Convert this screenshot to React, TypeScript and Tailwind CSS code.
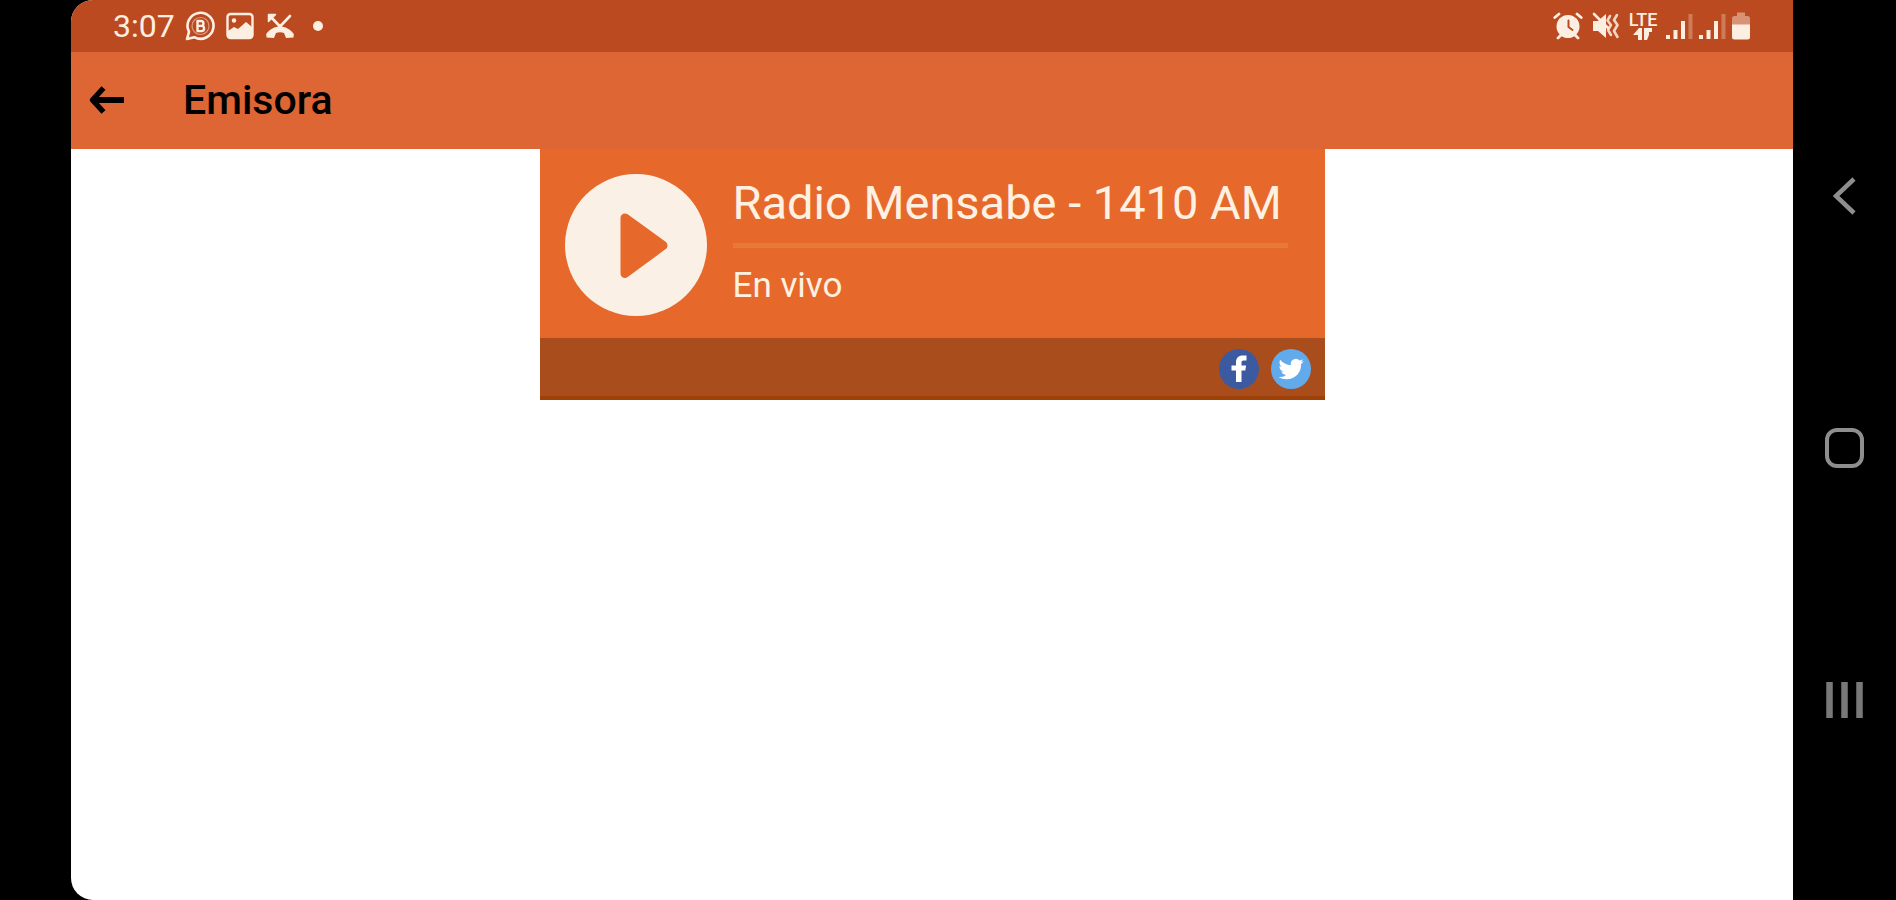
import type { ReactNode } from "react";

const ICON_COLOR = "#fdeee2";

function IconBase({ children, className }: { children: ReactNode; className: string }) {
  return (
    <svg
      viewBox="0 0 30 30"
      className={className}
      fill="none"
      stroke={ICON_COLOR}
      strokeLinecap="round"
      strokeLinejoin="round"
      aria-hidden="true"
    >
      {children}
    </svg>
  );
}

function BusinessChatIcon() {
  return (
    <IconBase className="size-[30px]">
      <path d="M2 28l2-7.200A13 13 0 1 1 9.300 26.200z" strokeWidth="2.600" />
      <circle cx="15.500" cy="15" r="8.500" strokeWidth="1.200" opacity="0.5" />
      <path
        d="M12.500 10h3.500a2.400 2.400 0 0 1 0 4.900h-3.500zM12.500 14.900h4a2.600 2.600 0 0 1 0 5.200h-4z"
        strokeWidth="2.400"
      />
    </IconBase>
  );
}

function ImageIcon() {
  return (
    <IconBase className="size-[30px]">
      <rect x="2.500" y="3" width="25" height="24" rx="3" strokeWidth="2.400" />
      <circle cx="9" cy="9.500" r="2.200" fill={ICON_COLOR} stroke="none" />
      <path d="M3 20l6-4 4 2 8-7 6 5v10H3z" fill={ICON_COLOR} stroke="none" />
    </IconBase>
  );
}

function MissedCallIcon() {
  return (
    <IconBase className="size-[30px]">
      <path d="M6 6l9 9.500L25 5" strokeWidth="2.600" />
      <path d="M3.500 10.500V3.500h7z" fill={ICON_COLOR} strokeWidth="1.500" />
      <path
        d="M1.200 23c7-10 20.600-10 27.600 0l-.3 3.500-7.500.5-2-5c-2.600-.9-5.400-.9-8 0l-2 5-7.500-.5z"
        fill={ICON_COLOR}
        stroke="none"
      />
    </IconBase>
  );
}

function AlarmIcon() {
  return (
    <IconBase className="size-[30px]">
      <circle cx="15" cy="15.500" r="11.500" fill={ICON_COLOR} stroke="none" />
      <path d="M1.800 6.500L6 3M28.200 6.500L24 3M5 27l3-3M25 27l-3-3" strokeWidth="2.800" />
      <path d="M15.500 9.500v6.500l4 3" stroke="#bb4a20" strokeWidth="2" />
    </IconBase>
  );
}

function MuteIcon() {
  return (
    <IconBase className="size-[30px]">
      <path d="M2 10h5l8-7v24l-8-7H2z" fill={ICON_COLOR} stroke="none" />
      <path d="M3 3l14 14" strokeWidth="2.600" />
      <path
        d="M19 5l-2.500 4.500L20 14l-3 5 3 5M26 4l-3 5 3.500 5-3.500 6 3.500 6"
        strokeWidth="2.600"
        opacity="0.85"
      />
    </IconBase>
  );
}

function LteIcon() {
  return (
    <div className="flex w-7 flex-col items-center">
      <span className="text-lg leading-4 font-medium">LTE</span>
      <svg viewBox="0 0 20 12" className="h-3 w-5" fill={ICON_COLOR} aria-hidden="true">
        <path d="M5 12V7H0l6-7h3v12zM11 0h8v4h-3v3l-2 5h-3z" />
      </svg>
    </div>
  );
}

function SignalIcon() {
  return (
    <IconBase className="size-[30px]">
      <g stroke="none" fill={ICON_COLOR}>
        <rect x="1" y="24" width="4" height="4" />
        <rect x="8.500" y="19" width="4" height="9" />
        <rect x="16" y="10" width="4" height="18" />
        <rect x="23.500" y="3" width="4" height="25" opacity="0.3" />
      </g>
    </IconBase>
  );
}

function BatteryIcon() {
  return (
    <svg viewBox="0 0 20 30" className="h-[30px] w-5" fill={ICON_COLOR} aria-hidden="true">
      <path d="M6 1.500h8v3.500h2.500a2.500 2.500 0 0 1 2.500 2.500V14H1V7.500A2.500 2.500 0 0 1 3.500 5H6z" opacity="0.45" />
      <path d="M1 13.500h18v12.500a2.500 2.500 0 0 1-2.500 2.500h-13A2.500 2.500 0 0 1 1 26z" />
    </svg>
  );
}

function StatusBar() {
  return (
    <div className="flex h-[52px] items-center justify-between bg-[#bb4a20] px-[42px] text-[#fdeee2]">
      <div className="flex items-center gap-[10px]">
        <time className="text-[32px] leading-10">3:07</time>
        <BusinessChatIcon />
        <ImageIcon />
        <MissedCallIcon />
        <span className="ml-2 size-[10px] rounded-full bg-[#fdeee2]" />
      </div>
      <div className="flex items-center gap-2">
        <AlarmIcon />
        <MuteIcon />
        <LteIcon />
        <div className="flex gap-[3px]">
          <SignalIcon />
          <SignalIcon />
          <BatteryIcon />
        </div>
      </div>
    </div>
  );
}

function AppBar() {
  return (
    <header className="flex h-[97px] items-center gap-14 bg-[#de6534] pb-[2px] pl-4 text-black">
      <button type="button" aria-label="Atrás">
        <svg viewBox="0 0 40 32" className="h-8 w-10" fill="none" stroke="currentColor" aria-hidden="true">
          <path d="M5 16h32" strokeWidth="6" />
          <path d="M16.500 4L5.500 16l11 12" strokeWidth="5.500" strokeLinejoin="round" />
        </svg>
      </button>
      <h1 className="text-[41px] leading-12 font-medium">Emisora</h1>
    </header>
  );
}

function RadioPlayer() {
  return (
    <section className="mx-auto w-full max-w-[785px]">
      <div className="flex items-center gap-[26px] bg-[#e6692b] px-[25px] pt-[25px] pb-[22px]">
        <button type="button" aria-label="Reproducir" className="shrink-0">
          <svg viewBox="0 0 142 142" className="size-[142px]" aria-hidden="true">
            <circle cx="71" cy="71" r="71" fill="#fbf0e6" />
            <path
              d="M60 44L98 71.500L60 99.500z"
              fill="#e6692b"
              stroke="#e6692b"
              strokeWidth="9"
              strokeLinejoin="round"
            />
          </svg>
        </button>
        <div className="min-w-0 flex-1 pr-3 pb-[6px] text-[#fff1e2]">
          <h2 className="pb-3 text-[47px] leading-14 whitespace-nowrap">Radio Mensabe - 1410 AM</h2>
          <div className="h-[5px] bg-[#e87a38]" />
          <p className="pt-[14px] text-[35px] leading-12">En vivo</p>
        </div>
      </div>
      <div className="flex h-[62px] items-center justify-end gap-3 bg-[#aa4d1c] pr-[14px] shadow-[inset_0_-4px_#9f4106]">
        <a href="#facebook" aria-label="Facebook">
          <svg viewBox="0 0 40 40" className="size-10" aria-hidden="true">
            <circle cx="20" cy="20" r="20" fill="#3c5a9f" />
            <path
              d="M17 33V21.500h-4.500v-5H17V13.500c0-4.600 2.700-7 6.700-7h3.800v5h-2.700c-1.900 0-2.300.9-2.300 2.300v2.700h4.600l-.8 5h-3.800V33z"
              fill="#fff"
            />
          </svg>
        </a>
        <a href="#twitter" aria-label="Twitter">
          <svg viewBox="0 0 40 40" className="size-10" aria-hidden="true">
            <circle cx="20" cy="20" r="20" fill="#61aaec" />
            <path
              transform="translate(7.500 7.500) scale(1.050)"
              d="M23.950 4.570a10 10 0 0 1-2.820.770 4.960 4.960 0 0 0 2.160-2.720c-.950.560-2 .960-3.130 1.180a4.920 4.920 0 0 0-8.380 4.480C7.690 8.090 4.070 6.130 1.640 3.160a4.820 4.820 0 0 0-.670 2.470c0 1.710.870 3.210 2.190 4.100a4.900 4.900 0 0 1-2.230-.620v.060a4.920 4.920 0 0 0 3.950 4.830 5 5 0 0 1-2.210.080 4.940 4.940 0 0 0 4.600 3.420A9.870 9.870 0 0 1 0 19.540a13.990 13.990 0 0 0 7.550 2.210c9.050 0 14-7.500 14-13.980 0-.210 0-.420-.020-.630a9.940 9.940 0 0 0 2.420-2.570z"
              fill="#fff"
            />
          </svg>
        </a>
      </div>
    </section>
  );
}

function SystemNav() {
  const buttons = [
    { label: "Volver", shape: <path d="M33 7L15 24l18 17" strokeWidth="4.500" /> },
    { label: "Inicio", shape: <rect x="6" y="6" width="35" height="36" rx="10" strokeWidth="4" /> },
    { label: "Recientes", shape: <path d="M8.500 6v36M23.500 6v36M38.500 6v36" strokeWidth="6.500" opacity="0.85" /> },
  ];

  return (
    <nav className="flex w-[103px] shrink-0 flex-col items-center justify-around pt-[70px] pb-[74px] text-[#8e8e8e]">
      {buttons.map((b) => (
        <button key={b.label} type="button" aria-label={b.label}>
          <svg viewBox="0 0 48 48" className="size-12" fill="none" stroke="currentColor" aria-hidden="true">
            {b.shape}
          </svg>
        </button>
      ))}
    </nav>
  );
}

export default function App() {
  return (
    <div className="flex min-h-screen bg-black pl-[71px] font-[Roboto,sans-serif]">
      <main className="min-w-0 flex-1 overflow-hidden rounded-l-[22px] bg-white">
        <StatusBar />
        <AppBar />
        <RadioPlayer />
      </main>
      <SystemNav />
    </div>
  );
}
